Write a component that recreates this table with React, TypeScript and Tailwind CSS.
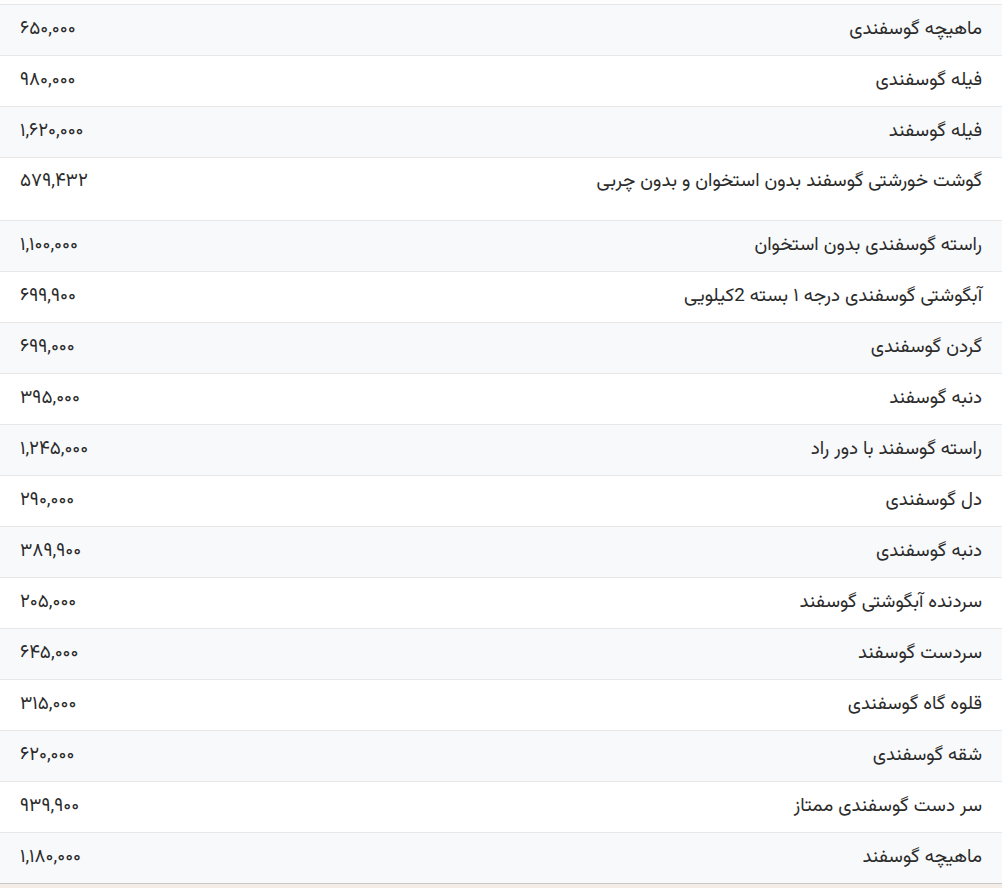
import React from "react";

const rows: { name: string; price: string; tall?: boolean }[] = [
  { name: "ماهیچه گوسفندی", price: "۶۵۰,۰۰۰" },
  { name: "فیله گوسفندی", price: "۹۸۰,۰۰۰" },
  { name: "فیله گوسفند", price: "۱,۶۲۰,۰۰۰" },
  { name: "گوشت خورشتی گوسفند بدون استخوان و بدون چربی", price: "۵۷۹,۴۳۲", tall: true },
  { name: "راسته گوسفندی بدون استخوان", price: "۱,۱۰۰,۰۰۰" },
  { name: "آبگوشتی گوسفندی درجه ۱ بسته 2کیلویی", price: "۶۹۹,۹۰۰" },
  { name: "گردن گوسفندی", price: "۶۹۹,۰۰۰" },
  { name: "دنبه گوسفند", price: "۳۹۵,۰۰۰" },
  { name: "راسته گوسفند با دور راد", price: "۱,۲۴۵,۰۰۰" },
  { name: "دل گوسفندی", price: "۲۹۰,۰۰۰" },
  { name: "دنبه گوسفندی", price: "۳۸۹,۹۰۰" },
  { name: "سردنده آبگوشتی گوسفند", price: "۲۰۵,۰۰۰" },
  { name: "سردست گوسفند", price: "۶۴۵,۰۰۰" },
  { name: "قلوه گاه گوسفندی", price: "۳۱۵,۰۰۰" },
  { name: "شقه گوسفندی", price: "۶۲۰,۰۰۰" },
  { name: "سر دست گوسفندی ممتاز", price: "۹۳۹,۹۰۰" },
  { name: "ماهیچه گوسفند", price: "۱,۱۸۰,۰۰۰" },
];

export default function App() {
  return (
    <div
      className="w-[1002px] h-[888px] overflow-hidden bg-[#f4ece7] text-[#2b2b2b] text-[18.8px]"
      style={{ fontFamily: '"Vazirmatn", "Noto Sans Arabic", "DejaVu Sans", sans-serif' }}
    >
      <div className="h-[4px] bg-[#fdfdfd]" />
      <div className="border-b border-[#c9c9c9]">
        {rows.map((r, i) => (
          <div
            key={i}
            dir="rtl"
            className={`flex border-t border-[#e7e7e7] ${i % 2 === 0 ? "bg-[#f8f9fb]" : "bg-white"} ${
              r.tall ? "h-[63px] items-start pt-[10px]" : "h-[51px] items-center"
            }`}
          >
            <div className="flex-1 pr-[20px] text-right leading-[28px]">{r.name}</div>
            <div className="w-[200px] pl-[20px] text-left leading-[28px]">
              <span dir="ltr">{r.price}</span>
            </div>
          </div>
        ))}
      </div>
    </div>
  );
}
